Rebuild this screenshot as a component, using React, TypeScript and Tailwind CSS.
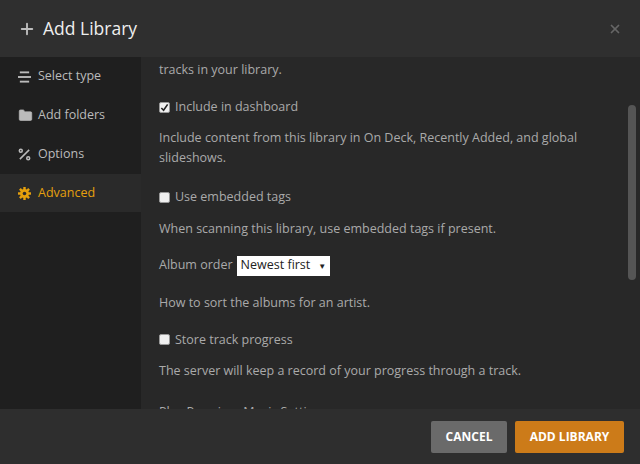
import { Plus, X, Folder, Settings } from "lucide-react";

const font = { fontFamily: '"Open Sans", "Liberation Sans", sans-serif' };

function Check({ on }: { on?: boolean }) {
  return (
    <span className="w-[11px] h-[11px] bg-[#f0f0f0] border border-[#999] rounded-[2px] flex items-center justify-center">
      {on && (
        <svg viewBox="0 0 10 10" className="w-[9px] h-[9px]">
          <path d="M1.5 5.5 L4 8 L8.5 1.5" stroke="#222" strokeWidth="1.8" fill="none" />
        </svg>
      )}
    </span>
  );
}

export default function App() {
  return (
    <div style={font} className="w-[640px] h-[464px] bg-[#282828] flex flex-col overflow-hidden">
      <div className="h-[57px] bg-[#2f2f2f] flex items-center px-[18px] shrink-0">
        <Plus className="w-[18px] h-[18px] text-[#bdbdbd]" strokeWidth={2.5} />
        <span className="ml-[7px] text-[17.5px] text-[#eeeeee]">Add Library</span>
        <X className="ml-auto w-[14px] h-[14px] text-[#666]" strokeWidth={3} />
      </div>
      <div className="flex flex-1 min-h-0">
        <div className="w-[141px] bg-[#1f1f1f] text-[12.5px] text-[#bbbbbb] shrink-0">
          <div className="h-[39px] flex items-center px-[18px] gap-[7px]">
            <svg viewBox="0 0 14 12" className="w-[13px] h-[12px]" fill="#bbb">
              <rect x="2" y="0" width="10" height="2" />
              <rect x="0" y="5" width="14" height="2" />
              <rect x="2" y="10" width="10" height="2" />
            </svg>
            Select type
          </div>
          <div className="h-[39px] flex items-center px-[18px] gap-[5px]">
            <Folder className="w-[15px] h-[15px]" fill="#bbb" strokeWidth={1} />
            Add folders
          </div>
          <div className="h-[39px] flex items-center px-[18px] gap-[7px]">
            <svg viewBox="0 0 14 14" className="w-[13px] h-[13px]" stroke="#bbb" strokeWidth="1.6" fill="none">
              <path d="M2 12 L12 2" />
              <circle cx="3" cy="3" r="1.6" />
              <circle cx="11" cy="11" r="1.6" />
            </svg>
            Options
          </div>
          <div className="h-[38px] flex items-center px-[18px] gap-[7px] bg-[#2a2a2a] text-[#e5a00d]">
            <svg viewBox="0 0 16 16" className="w-[13px] h-[13px]">
              <g fill="#e5a00d">
                <circle cx="8" cy="8" r="5.5" />
                {[0, 45, 90, 135].map((a) => (
                  <rect key={a} x="6.5" y="0" width="3" height="16" transform={`rotate(${a} 8 8)`} />
                ))}
              </g>
              <circle cx="8" cy="8" r="2.2" fill="#2a2a2a" />
            </svg>
            Advanced
          </div>
        </div>
        <div className="flex-1 flex min-w-0">
          <div className="flex-1 pl-[18px] pr-[10px] text-[12.5px] text-[#aaaaaa] overflow-hidden">
            <p className="mt-[4px] leading-[18px]">tracks in your library.</p>
            <label className="mt-[19px] flex items-center gap-[5px]"><Check on /><span>Include in dashboard</span></label>
            <p className="mt-[11px] leading-[20px]">Include content from this library in On Deck, Recently Added, and global slideshows.</p>
            <label className="mt-[20px] flex items-center gap-[5px]"><Check /><span>Use embedded tags</span></label>
            <p className="mt-[13px] leading-[18px]">When scanning this library, use embedded tags if present.</p>
            <div className="mt-[18px] flex items-center gap-[4px]">
              <span>Album order</span>
              <span className="bg-white text-[#222] h-[20px] px-[4px] flex items-center gap-[8px]">
                Newest first <span className="text-[8px]">▼</span>
              </span>
            </div>
            <p className="mt-[18px] leading-[18px]">How to sort the albums for an artist.</p>
            <label className="mt-[19px] flex items-center gap-[5px]"><Check /><span>Store track progress</span></label>
            <p className="mt-[13px] leading-[18px]">The server will keep a record of your progress through a track.</p>
            <p className="mt-[23px] leading-[18px]">Plex Premium Music Settings</p>
          </div>
          <div className="w-[16px] shrink-0 flex justify-center">
            <div className="w-[8px] h-[175px] mt-[48px] bg-[#555] rounded-[4px]" />
          </div>
        </div>
      </div>
      <div className="h-[55px] bg-[#2e2e2e] shrink-0 flex items-center justify-end gap-[8px] pr-[16px]">
        <button className="h-[32px] w-[76px] bg-[#6a6a6a] text-white text-[12px] font-bold rounded-[2px]">CANCEL</button>
        <button className="h-[32px] w-[109px] bg-[#cc7b19] text-white text-[12px] font-bold rounded-[2px]">ADD LIBRARY</button>
      </div>
    </div>
  );
}
